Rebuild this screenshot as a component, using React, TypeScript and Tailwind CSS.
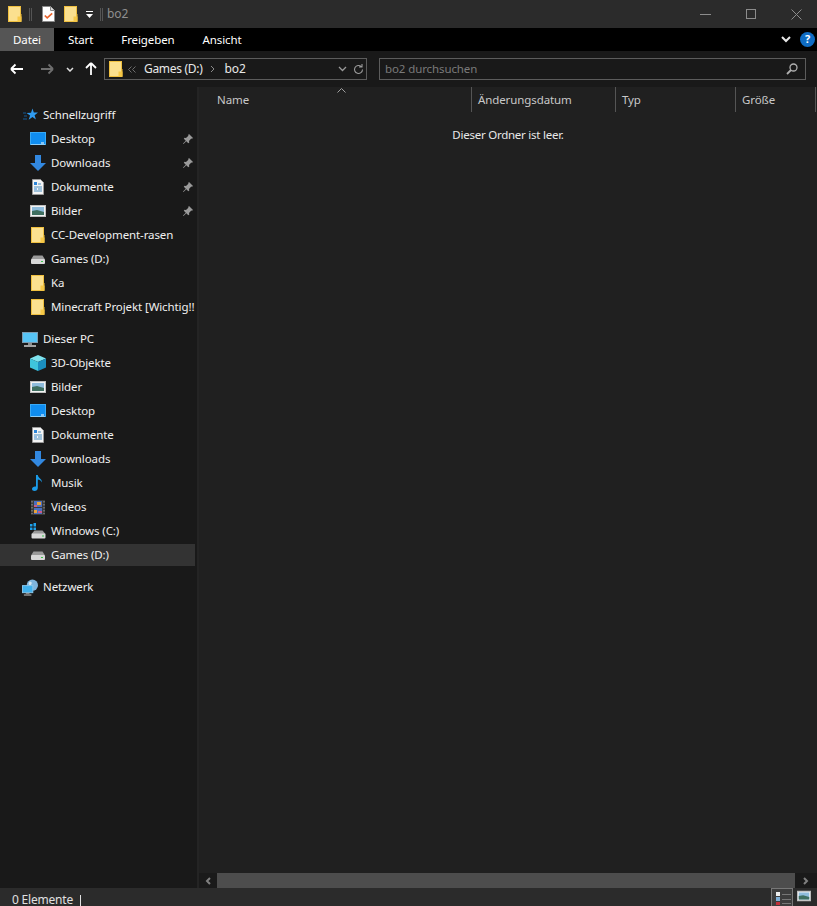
import { ReactNode } from "react";

function Folder({ className = "" }: { className?: string }) {
  return (
    <svg width="14" height="16" viewBox="0 0 14 16" className={className}>
      <rect x="0.5" y="0.5" width="12" height="15" fill="#fbe08f" stroke="#f0c040" />
      <path d="M9.5 15.5v-5h4v5z" fill="#f7c948" />
      <path d="M13 8v8" stroke="#f0c040" />
    </svg>
  );
}

function Checklist() {
  return (
    <svg width="13" height="16" viewBox="0 0 13 16">
      <path d="M.5.5h8l4 4v11H.5z" fill="#fff" stroke="#8a8a8a" />
      <path d="M8.5.5v4h4" fill="#ddd" stroke="#8a8a8a" />
      <path d="M2.8 9.5l2.4 2.4 5-4.6" fill="none" stroke="#e8632c" strokeWidth="1.7" />
    </svg>
  );
}

function Star() {
  return (
    <svg width="15" height="14" viewBox="0 0 15 14">
      <path d="M9.5.5l1.3 4 4.2.1-3.4 2.6 1.3 4.3-3.4-2.5-3.8 2.8 1.4-4.3L3.5 5l4.5-.2z" fill="#2f9bf0" />
      <path d="M0 5h3M1 8h3M0 11h4" stroke="#155a96" />
    </svg>
  );
}

function Desktop() {
  return (
    <svg width="16" height="14" viewBox="0 0 16 14">
      <rect x=".5" y=".5" width="15" height="12" fill="#0f8df0" stroke="#38a9f5" />
      <path d="M1 12.5h14" stroke="#8ccdf8" />
      <path d="M11 11h3" stroke="#fff" />
    </svg>
  );
}

function DownloadArrow() {
  return (
    <svg width="16" height="16" viewBox="0 0 16 16">
      <path d="M5 0h6v8h5l-8 8-8-8h5z" fill="#3288e0" />
    </svg>
  );
}

function Doc() {
  return (
    <svg width="12" height="16" viewBox="0 0 12 16">
      <path d="M.5.5h8l3 3v12H.5z" fill="#f4f4f4" stroke="#9a9a9a" />
      <path d="M2 3h3v3H2z" fill="#2f86d8" />
      <path d="M6 5h3M2 8h8M6 10h4M2 12h8" stroke="#4a8fc0" />
      <path d="M2 10h3" stroke="#2f86d8" />
    </svg>
  );
}

function Picture({ small = false }: { small?: boolean }) {
  return (
    <svg width={small ? 14 : 16} height="12" viewBox="0 0 16 12">
      <rect x=".5" y=".5" width="15" height="11" fill="#f2f2f2" stroke="#c0c0c0" />
      <rect x="2" y="2" width="12" height="8" fill="#8fbcdc" />
      <path d="M2 6l5-1 7 2v3H2z" fill="#3f6f60" />
    </svg>
  );
}

function Drive({ led = "#39c24a" }: { led?: string }) {
  return (
    <svg width="14" height="9" viewBox="0 0 14 9">
      <path d="M2.500.5h9L14 4.500H0z" fill="#9a9a9a" />
      <rect x="0" y="4" width="14" height="5" rx="1" fill="#d8d8d8" />
      <rect x="10" y="6" width="2" height="1" fill={led} />
    </svg>
  );
}

function WinDrive() {
  return (
    <svg width="16" height="16" viewBox="0 0 16 16">
      <path d="M0 1h2.500v2.500H0zM3.500 0H6v3.500H3.500zM0 4.500h2.500V7H0zM3.500 4.500H6V7H3.500z" fill="#1ea0e8" />
      <path d="M4.500 7.500h8L15.500 11h-14z" fill="#9a9a9a" />
      <rect x="1.500" y="10.500" width="14" height="5" rx="1" fill="#d8d8d8" />
      <rect x="12" y="12.500" width="2" height="1" fill="#39c24a" />
    </svg>
  );
}

function Pc() {
  return (
    <svg width="16" height="15" viewBox="0 0 16 15">
      <rect x=".5" y=".5" width="15" height="10" fill="#57c4f5" stroke="#7d9bb0" />
      <path d="M6 11h4v2H6z" fill="#8a8a8a" />
      <path d="M2 14h12" stroke="#d0d0d0" strokeWidth="1.500" />
    </svg>
  );
}

function Cube() {
  return (
    <svg width="16" height="16" viewBox="0 0 16 16">
      <path d="M8 0l8 3.500L8 7 0 3.500z" fill="#7fe3ee" />
      <path d="M0 3.500L8 7v9l-8-3.500z" fill="#3fc5dc" />
      <path d="M16 3.500L8 7v9l8-3.500z" fill="#1b8fc0" />
    </svg>
  );
}

function Note() {
  return (
    <svg width="12" height="16" viewBox="0 0 12 16">
      <path d="M4 0h1.800c.3 3 4.200 3.500 4.200 7.500-1-2-2.500-2.800-4.200-3V13c0 1.800-1.500 3-3.300 3C1 16 0 15.200 0 14c0-1.500 1.500-2.600 3-2.600.4 0 .7 0 1 .2z" fill="#1b9be8" />
    </svg>
  );
}

function Film() {
  return (
    <svg width="14" height="15" viewBox="0 0 14 15">
      <rect width="14" height="15" fill="#3a3a3a" />
      <path d="M1 1v13M13 1v13" stroke="#999" strokeDasharray="1.500 1.500" />
      <rect x="3" y="1" width="8" height="6" fill="#4a6fc0" />
      <rect x="3" y="8" width="8" height="6" fill="#4a6fc0" />
      <path d="M6 2h4v3H6zM3 10h3v3H3z" fill="#e8a13a" />
      <path d="M3 5h3v2H3zM7 11h4v2H7z" fill="#c85a8a" />
    </svg>
  );
}

function Globe() {
  return (
    <svg width="17" height="17" viewBox="0 0 17 17">
      <circle cx="11" cy="6" r="6" fill="#7fb4dc" />
      <path d="M8 2c2 0 3 1 2 3S7 6 7 4z" fill="#d8e8f2" />
      <rect x=".5" y="6.500" width="11" height="7.500" fill="#3fb0ec" stroke="#8ac8ec" />
      <path d="M4 14.500h4v1H4z" fill="#999" />
      <path d="M2 16.500h8" stroke="#d0d0d0" />
    </svg>
  );
}

function Pin() {
  return (
    <svg width="10" height="10" viewBox="0 0 10 10">
      <path d="M6 0l4 4-1 .8-.7-.2L6 7l.3 1.500-1 .8L3.300 7.200.5 10 0 9.500l2.800-2.800L.8 4.700l.8-1L3 4l2.400-2.300-.2-.8z" fill="#9a9a9a" />
    </svg>
  );
}

type NavItem = { label: string; icon: ReactNode; pin?: boolean; active?: boolean };

const quick: NavItem[] = [
  { label: "Desktop", icon: <Desktop />, pin: true },
  { label: "Downloads", icon: <DownloadArrow />, pin: true },
  { label: "Dokumente", icon: <Doc />, pin: true },
  { label: "Bilder", icon: <Picture />, pin: true },
  { label: "CC-Development-rasen", icon: <Folder /> },
  { label: "Games (D:)", icon: <Drive /> },
  { label: "Ka", icon: <Folder /> },
  { label: "Minecraft Projekt [Wichtig!!", icon: <Folder /> },
];

const pc: NavItem[] = [
  { label: "3D-Objekte", icon: <Cube /> },
  { label: "Bilder", icon: <Picture /> },
  { label: "Desktop", icon: <Desktop /> },
  { label: "Dokumente", icon: <Doc /> },
  { label: "Downloads", icon: <DownloadArrow /> },
  { label: "Musik", icon: <Note /> },
  { label: "Videos", icon: <Film /> },
  { label: "Windows (C:)", icon: <WinDrive /> },
  { label: "Games (D:)", icon: <Drive />, active: true },
];

function Row({ item }: { item: NavItem }) {
  return (
    <div className="h-6 py-px mr-[2px]">
      <div className={`h-[22px] flex items-center pl-[30px] ${item.active ? "bg-[#333333]" : ""}`}>
        <span className="w-[16px] h-[16px] flex items-center justify-center shrink-0">{item.icon}</span>
        <span className={`ml-[5px] whitespace-nowrap text-[#f0f0f0] ${item.pin ? "w-[132px]" : "w-[146px]"}`}>{item.label}</span>
        {item.pin && <Pin />}
      </div>
    </div>
  );
}

function Head({ icon, label }: { icon: ReactNode; label: string }) {
  return (
    <div className="h-6 flex items-center pl-[22px]">
      <span className="w-[16px] h-[17px] flex items-center justify-center shrink-0">{icon}</span>
      <span className="ml-[5px] text-[#f0f0f0]">{label}</span>
    </div>
  );
}

function Col({ label, width }: { label: string; width: string }) {
  return (
    <div className={`${width} h-full border-r border-[#555555] pl-[6px] flex items-center text-[#c8c8c8]`}>{label}</div>
  );
}

export default function App() {
  return (
    <div className="w-[817px] h-[906px] flex flex-col overflow-hidden bg-[#191919] text-[11.5px] tracking-[-0.1px] font-['Noto_Sans','Open_Sans',sans-serif]">
      {/* title bar */}
      <div className="h-[28px] shrink-0 bg-[#2b2b2b] flex items-center pl-[8px]">
        <Folder />
        <span className="ml-[7px] w-[3px] h-[13px] border-x border-[#555555]" />
        <span className="ml-[10px] flex">
          <Checklist />
        </span>
        <span className="ml-[9px] flex">
          <Folder />
        </span>
        <svg width="9" height="9" viewBox="0 0 9 9" className="ml-[7px]">
          <path d="M1 1h7v1H1z" fill="#fff" />
          <path d="M1 4h7L4.500 8z" fill="#fff" />
        </svg>
        <span className="ml-[6px] w-[3px] h-[13px] border-x border-[#555555]" />
        <span className="ml-[4px] text-[#8f8f8f] text-[12px]">bo2</span>
        <div className="ml-auto flex items-center text-[#8c8c8c]">
          <svg width="11" height="11" viewBox="0 0 11 11">
            <path d="M0 5.500h11" stroke="#8c8c8c" />
          </svg>
          <svg width="10" height="10" viewBox="0 0 10 10" className="ml-[35px]">
            <rect x=".5" y=".5" width="9" height="9" fill="none" stroke="#8c8c8c" />
          </svg>
          <svg width="11" height="11" viewBox="0 0 11 11" className="ml-[35px] mr-[15px]">
            <path d="M.5.5l10 10M10.500.5l-10 10" stroke="#8c8c8c" />
          </svg>
        </div>
      </div>

      {/* ribbon tabs */}
      <div className="h-[23px] shrink-0 bg-black flex items-center text-white">
        <div className="w-[54px] h-full bg-[#555555] flex items-center justify-center">Datei</div>
        <span className="ml-[14px]">Start</span>
        <span className="ml-[28px]">Freigeben</span>
        <span className="ml-[28px]">Ansicht</span>
        <svg width="10" height="7" viewBox="0 0 10 7" className="ml-auto">
          <path d="M1 1l4 4 4-4" fill="none" stroke="#e8e8e8" strokeWidth="2" />
        </svg>
        <span className="ml-[9px] mr-[2px] w-[15px] h-[15px] rounded-full bg-[#0f6cc4] flex items-center justify-center text-white font-bold text-[11px]">
          ?
        </span>
      </div>

      {/* address row */}
      <div className="h-[36px] shrink-0 bg-[#191919] flex items-center">
        <svg width="14" height="12" viewBox="0 0 14 12" className="ml-[10px]">
          <path d="M1 6h12M1 6l4.500-4.500M1 6l4.500 4.500" fill="none" stroke="#fff" strokeWidth="1.800" />
        </svg>
        <svg width="14" height="12" viewBox="0 0 14 12" className="ml-[16px]">
          <path d="M13 6H1M13 6L8.500 1.500M13 6l-4.500 4.500" fill="none" stroke="#6e6e6e" strokeWidth="1.800" />
        </svg>
        <svg width="8" height="5" viewBox="0 0 8 5" className="ml-[12px]">
          <path d="M1 1l3 3 3-3" fill="none" stroke="#e0e0e0" strokeWidth="1.500" />
        </svg>
        <svg width="12" height="14" viewBox="0 0 12 14" className="ml-[11px]">
          <path d="M6 13V1M6 1L1 6M6 1l5 5" fill="none" stroke="#fff" strokeWidth="1.800" />
        </svg>
        <div className="ml-[7px] w-[263px] h-[22px] border border-[#5c5c5c] flex items-center text-[12px]">
          <span className="ml-[4px] flex">
            <Folder />
          </span>
          <svg width="8" height="7" viewBox="0 0 8 7" className="ml-[5px]">
            <path d="M3.500.5L.5 3.500l3 3M7.500.5l-3 3 3 3" fill="none" stroke="#6e6e6e" />
          </svg>
          <span className="ml-[8px] text-[#e8e8e8] tracking-[-0.3px]">Games (D:)</span>
          <svg width="5" height="8" viewBox="0 0 5 8" className="ml-[7px]">
            <path d="M1 1l3 3-3 3" fill="none" stroke="#8a8a8a" />
          </svg>
          <span className="ml-[10px] text-[#e8e8e8]">bo2</span>
          <svg width="9" height="6" viewBox="0 0 9 6" className="ml-auto">
            <path d="M1 1l3.500 3.500L8 1" fill="none" stroke="#9a9a9a" strokeWidth="1.300" />
          </svg>
          <svg width="11" height="11" viewBox="0 0 11 11" className="ml-[6px] mr-[2px]">
            <path d="M9.500 5.500a4 4 0 1 1-1.200-2.900M9 0v3H6" fill="none" stroke="#9a9a9a" strokeWidth="1.100" />
          </svg>
        </div>
        <div className="ml-[12px] w-[427px] h-[22px] border border-[#5c5c5c] flex items-center pl-[5px] text-[#7a7a7a]">
          bo2 durchsuchen
          <svg width="12" height="12" viewBox="0 0 12 12" className="ml-auto mr-[7px]">
            <circle cx="7.500" cy="4.500" r="3.500" fill="none" stroke="#b0b0b0" strokeWidth="1.300" />
            <path d="M5 7l-4 4" stroke="#b0b0b0" strokeWidth="1.800" />
          </svg>
        </div>
      </div>

      {/* main */}
      <div className="flex-1 min-h-0 flex">
        <nav className="w-[197px] shrink-0 bg-[#191919] pt-[16px] flex flex-col gap-[8px] overflow-hidden">
          <div>
            <Head icon={<Star />} label="Schnellzugriff" />
            {quick.map((item) => (
              <Row key={item.label} item={item} />
            ))}
          </div>
          <div>
            <Head icon={<Pc />} label="Dieser PC" />
            {pc.map((item) => (
              <Row key={item.label} item={item} />
            ))}
          </div>
          <Head icon={<Globe />} label="Netzwerk" />
        </nav>

        <div className="w-[2px] shrink-0 bg-[#242424]" />

        <div className="flex-1 min-w-0 flex flex-col bg-[#202020]">
          <div className="relative h-[25px] shrink-0 flex">
            <span className="w-[12px]" />
            <Col label="Name" width="w-[261px]" />
            <Col label="Änderungsdatum" width="w-[144px]" />
            <Col label="Typ" width="w-[120px]" />
            <Col label="Größe" width="w-[80px]" />
            <svg width="9" height="5" viewBox="0 0 9 5" className="absolute left-[138px] top-[1px]">
              <path d="M.5 4.500l4-4 4 4" fill="none" stroke="#a0a0a0" />
            </svg>
          </div>

          <div className="flex-1 min-h-0 pt-[14px] text-center text-[#e8e8e8] tracking-[-0.25px]">Dieser Ordner ist leer.</div>

          <div className="h-[15px] shrink-0 flex items-stretch bg-[#1a1a1a]">
            <div className="w-[18px] flex items-center justify-center">
              <svg width="6" height="8" viewBox="0 0 6 8">
                <path d="M5 1L2 4l3 3" fill="none" stroke="#808080" strokeWidth="2" />
              </svg>
            </div>
            <div className="flex-1 bg-[#4d4d4d]" />
            <div className="w-[22px] flex items-center justify-center">
              <svg width="6" height="8" viewBox="0 0 6 8">
                <path d="M1 1l3 3-3 3" fill="none" stroke="#808080" strokeWidth="2" />
              </svg>
            </div>
          </div>
        </div>
      </div>

      {/* status bar */}
      <div className="relative h-[18px] shrink-0 bg-[#2b2b2b] flex items-center text-[#e0e0e0] overflow-hidden">
        <span className="ml-[12px] w-[68px] mt-[5px] text-[12px] tracking-[-0.2px] whitespace-nowrap">0 Elemente</span>
        <span className="w-px h-[11px] mt-[6px] bg-[#e0e0e0]" />
        <div className="ml-auto mr-[24px] w-[22px] h-[18px] border border-[#777777] border-b-0 bg-[#3d3d3d] flex flex-col gap-[1px] pl-[4px] pt-[3px]">
          <div className="flex items-center gap-[2px]">
            <span className="w-[4px] h-[4px] bg-[#eeeeee]" />
            <span className="w-[9px] h-px bg-[#777777]" />
          </div>
          <div className="flex items-center gap-[2px]">
            <span className="w-[4px] h-[4px] bg-[#7fb0d8]" />
            <span className="w-[9px] h-px bg-[#777777]" />
          </div>
          <div className="flex items-center gap-[2px]">
            <span className="w-[4px] h-[3px] bg-[#c0303a]" />
            <span className="w-[9px] h-px bg-[#777777]" />
          </div>
        </div>
        <span className="absolute left-[797px] top-[2px] flex">
          <Picture small />
        </span>
      </div>
    </div>
  );
}
